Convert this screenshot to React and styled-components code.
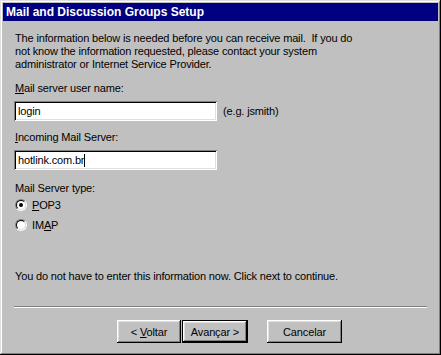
import React from 'react';
import styled, { createGlobalStyle } from 'styled-components';

const GlobalStyle = createGlobalStyle`
  html, body {
    margin: 0;
    padding: 0;
    background: #c0c0c0;
  }
  * {
    box-sizing: border-box;
  }
`;

const Window = styled.div`
  width: 441px;
  height: 355px;
  padding: 3px;
  display: flex;
  flex-direction: column;
  background: #c0c0c0;
  box-shadow: inset -1px -1px #000, inset 1px 1px #dfdfdf,
    inset -2px -2px #808080, inset 2px 2px #fff;
  font-family: "Liberation Sans", Arial, sans-serif;
  font-size: 11px;
  letter-spacing: -0.15px;
  color: #000;
`;

const TitleBar = styled.div`
  height: 18px;
  padding-left: 3px;
  display: flex;
  align-items: center;
  background: #000080;
  color: #fff;
  font-weight: bold;
  font-size: 12px;
  letter-spacing: 0;
`;

const Body = styled.div`
  flex: 1;
  display: flex;
  flex-direction: column;
  padding: 11px 11px 0 11px;
`;

const Text = styled.p`
  margin: ${p => p.$top || 0}px 0 0 0;
  line-height: 13px;
  padding-left: 1px;
`;

const Row = styled.div`
  display: flex;
  align-items: center;
  margin-top: ${p => p.$top || 0}px;
`;

const Input = styled.div`
  width: 203px;
  height: 20px;
  padding: 0 4px;
  display: flex;
  align-items: center;
  background: #fff;
  box-shadow: inset 1px 1px #808080, inset -1px -1px #fff,
    inset 2px 2px #000, inset -2px -2px #dfdfdf;
  line-height: 13px;
`;

const Caret = styled.span`
  display: inline-block;
  width: 1px;
  height: 13px;
  background: #000;
`;

const Hint = styled.span`
  margin-left: 6px;
`;

const RadioRow = styled.label`
  display: flex;
  align-items: center;
  height: 20px;
  padding-left: 1px;
`;

const RadioOuter = styled.span`
  width: 12px;
  height: 12px;
  border-radius: 50%;
  border: 1px solid;
  border-color: #808080 #fff #fff #808080;
  margin-right: 5px;
  display: flex;
`;

const RadioInner = styled.span`
  flex: 1;
  border-radius: 50%;
  border: 1px solid;
  border-color: #000 #dfdfdf #dfdfdf #000;
  background: #fff;
  display: flex;
  align-items: center;
  justify-content: center;
`;

const Dot = styled.span`
  width: 4px;
  height: 4px;
  border-radius: 50%;
  background: #000;
`;

const Separator = styled.div`
  margin-top: ${p => p.$top}px;
  height: 2px;
  border-top: 1px solid #808080;
  border-bottom: 1px solid #fff;
`;

const Buttons = styled.div`
  display: flex;
  margin-top: 12px;
  padding-left: 103px;
`;

const Button = styled.button`
  width: ${p => p.$width}px;
  height: 23px;
  margin-left: ${p => p.$gap || 0}px;
  padding: 0;
  border: none;
  background: #c0c0c0;
  font-family: inherit;
  font-size: 11px;
  letter-spacing: inherit;
  color: #000;
  box-shadow: ${p => p.$default
    ? 'inset -1px -1px #000, inset 1px 1px #000, inset -2px -2px #000, inset 2px 2px #fff, inset -3px -3px #808080, inset 3px 3px #dfdfdf'
    : 'inset -1px -1px #000, inset 1px 1px #fff, inset -2px -2px #808080, inset 2px 2px #dfdfdf'};
`;

function Radio({ checked, children }) {
  return (
    <RadioRow>
      <RadioOuter>
        <RadioInner>{checked && <Dot />}</RadioInner>
      </RadioOuter>
      <span>{children}</span>
    </RadioRow>
  );
}

export default function App() {
  return (
    <>
      <GlobalStyle />
      <Window>
        <TitleBar>Mail and Discussion Groups Setup</TitleBar>
        <Body>
          <Text>
            The information below is needed before you can receive mail.&nbsp; If you do
            <br />
            not know the information requested, please contact your system
            <br />
            administrator or Internet Service Provider.
          </Text>

          <Text $top={11}>
            <u>M</u>ail server user name:
          </Text>
          <Row $top={6}>
            <Input>login</Input>
            <Hint>(e.g. jsmith)</Hint>
          </Row>

          <Text $top={10}>
            <u>I</u>ncoming Mail Server:
          </Text>
          <Row $top={6}>
            <Input>
              hotlink.com.br
              <Caret />
            </Input>
          </Row>

          <Text $top={12}>Mail Server type:</Text>
          <Radio checked>
            <u>P</u>OP3
          </Radio>
          <Radio>
            IM<u>A</u>P
          </Radio>

          <Text $top={35}>
            You do not have to enter this information now. Click next to continue.
          </Text>

          <Separator $top={23} />

          <Buttons>
            <Button $width={64}>
              &lt; <u>V</u>oltar
            </Button>
            <Button $width={66} $gap={1} $default>
              Avançar &gt;
            </Button>
            <Button $width={75} $gap={19}>
              Cancelar
            </Button>
          </Buttons>
        </Body>
      </Window>
    </>
  );
}
